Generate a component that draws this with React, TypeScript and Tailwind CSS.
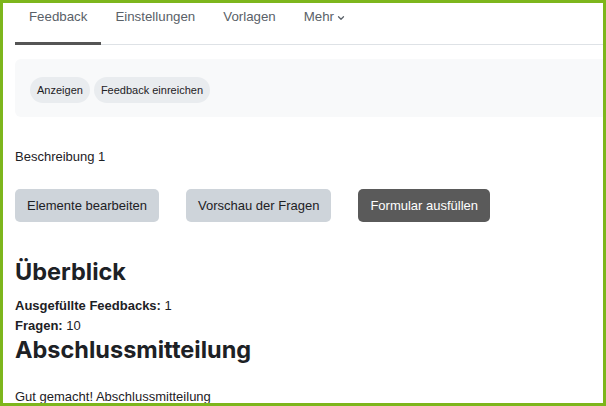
import { ChevronDown } from "lucide-react";

const tabs = ["Feedback", "Einstellungen", "Vorlagen"];

export default function App() {
  return (
    <div
      className="w-[606px] h-[406px] overflow-hidden bg-white border-[3px] border-[#7db61c] text-[#1d2125]"
      style={{ fontFamily: '"Liberation Sans", Arial, sans-serif' }}
    >
      <div className="pl-3">
        {/* Tabs */}
        <nav className="flex border-b border-[#dee2e6] text-[13.3px] leading-5 text-[#5a6168]">
          {tabs.map((t, i) => (
            <a
              key={t}
              className={
                "-mb-px h-[42px] px-[14px] pt-1 border-b-[3px] " +
                (i === 0 ? "border-[#555555]" : "border-transparent")
              }
            >
              {t}
            </a>
          ))}
          <a className="-mb-px h-[42px] px-[14px] pt-1 border-b-[3px] border-transparent flex items-start gap-[2px]">
            Mehr
            <ChevronDown className="mt-[6px] w-[10px] h-[10px]" strokeWidth={3} />
          </a>
        </nav>

        {/* Action bar */}
        <div className="mt-[14px] bg-[#f8f9fa] rounded-l-md pl-[15px] pt-[18px] pb-[14px] flex gap-1">
          <span className="h-[26px] px-[7px] rounded-full bg-[#e9ecef] text-[11px] flex items-center">
            Anzeigen
          </span>
          <span className="h-[26px] px-[7px] rounded-full bg-[#e9ecef] text-[11px] flex items-center">
            Feedback einreichen
          </span>
        </div>

        <p className="mt-[30px] text-[13px] leading-5">Beschreibung 1</p>

        <div className="mt-[22px] flex gap-[27px] text-[13px]">
          <button className="h-[33px] px-[12px] rounded-[5px] bg-[#ced4da]">
            Elemente bearbeiten
          </button>
          <button className="h-[33px] px-[12px] rounded-[5px] bg-[#ced4da]">
            Vorschau der Fragen
          </button>
          <button className="h-[33px] px-[12px] rounded-[5px] bg-[#5a5a5a] text-white">
            Formular ausfüllen
          </button>
        </div>

        <h2
          className="mt-[36px] text-[23.5px] leading-[1.2] font-bold"
          style={{ fontFamily: "Inter, sans-serif" }}
        >
          Überblick
        </h2>
        <div className="mt-[10px] text-[13px] leading-5">
          <div>
            <span className="font-bold">Ausgefüllte Feedbacks:</span> 1
          </div>
          <div>
            <span className="font-bold">Fragen:</span> 10
          </div>
        </div>
        <h2
          className="text-[23.5px] leading-[1.2] font-bold"
          style={{ fontFamily: "Inter, sans-serif" }}
        >
          Abschlussmitteilung
        </h2>
        <p className="mt-[23px] text-[13px] leading-5">
          Gut gemacht! Abschlussmitteilung
        </p>
      </div>
    </div>
  );
}
